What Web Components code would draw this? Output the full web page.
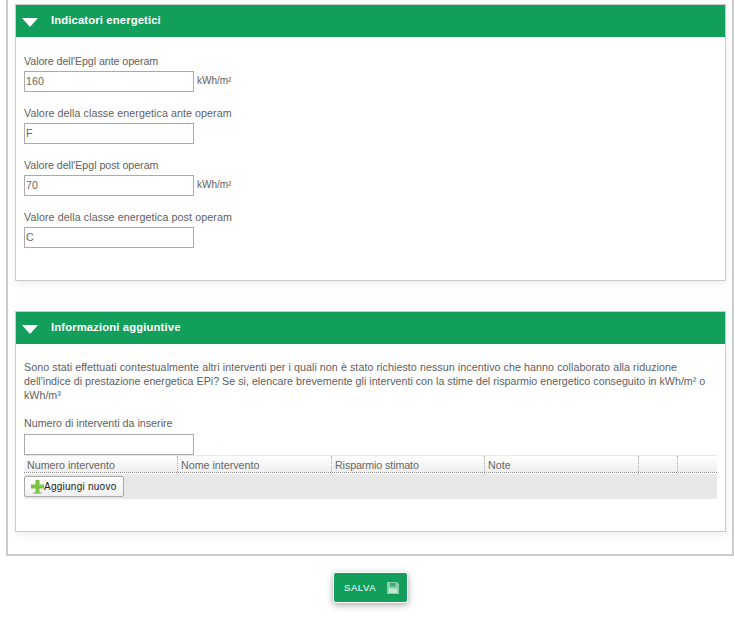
<!DOCTYPE html>
<html lang="it"><head><meta charset="utf-8"><title>Indicatori</title>
<style>
html,body{margin:0;padding:0;background:#fff}
body{width:734px;height:625px;overflow:hidden;font:10px "Liberation Sans",Arial,sans-serif;color:#555}
</style></head><body>
<template id="t-panel"><style>
:host{display:block;border:1px solid #ccc;background:#fff;box-shadow:0 3px 8px rgba(0,0,0,.07)}
.h{height:32px;background:#129e5b;color:#fff;display:flex;align-items:center;font:bold 11.3px "Liberation Sans",Arial,sans-serif;padding-left:6px;gap:13px;letter-spacing:.12px}
.h span{position:relative;top:-1px}
.h svg{display:block;width:16px;height:9px;margin-top:2px}
.b{padding:var(--pad,15px 8px 0);height:var(--h);box-sizing:border-box}
</style><div class="h"><svg viewBox="0 0 16 9"><path d="M0 0H16L8 9Z" fill="#fff"/></svg><span><slot name="title"></slot></span></div><div class="b"><slot></slot></div></template>

<template id="t-field"><style>
:host{display:block;height:52px;font:10.7px "Liberation Sans",Arial,sans-serif;color:#5e5e5e}
label{display:block;height:var(--lh,19px);line-height:18px;letter-spacing:var(--ls,0)}
.r{display:flex;align-items:center;gap:3px}
.i{width:170px;height:21px;box-sizing:border-box;border:1px solid #aaa;padding-left:1px;line-height:18px;font-size:10.7px;color:#666;background:#fff}
.u{font-size:10px;position:relative;top:-1px}
</style><label><slot></slot></label><div class="r"><div class="i"></div><span class="u"></span></div></template>

<template id="t-grid"><style>
:host{display:block;width:693px;font:10.7px "Liberation Sans",Arial,sans-serif;color:#666}
.hd{display:grid;grid-template-columns:154px 154px 153px 154px 39px 39px;height:18px;box-sizing:border-box;border-top:1px solid #e8e8e8;border-bottom:1px dotted #888;background:linear-gradient(#fff,#eee)}
.hd div{border-right:1px dotted #aaa;padding-left:3px;line-height:18px;box-sizing:border-box;white-space:nowrap}
.hd div:nth-child(3){letter-spacing:-.1px}
.hd div:last-child{border:0}
.tb{margin-top:1px;height:25px;box-sizing:border-box;padding-top:2px;background:#e8e8e8}
</style><div class="hd"><div>Numero intervento</div><div>Nome intervento</div><div>Risparmio stimato</div><div>Note</div><div></div><div></div></div><div class="tb"><slot></slot></div></template>

<template id="t-add"><style>
:host{display:inline-flex;box-sizing:border-box;width:100px;height:21px;align-items:center;padding-left:6px;border:1px solid #aaa;border-radius:2px;background:linear-gradient(#fff,#f0f0f0);font:10px "Liberation Sans",Arial,sans-serif;color:#222;letter-spacing:.25px;vertical-align:top}
svg{width:13px;height:14px;display:block;flex:none}
</style><svg viewBox="0 0 13 14"><ellipse cx="6.500" cy="13" rx="5" ry="1" fill="#bbb"/><path d="M4.500 0H8.500V4.500H13V8.500H8.500V13H4.500V8.500H0V4.500H4.500Z" fill="#7cc242"/><path d="M5 1H8V5H12V6H8V1Z" fill="#a8dc70" opacity=".7"/></svg><slot></slot></template>

<template id="t-save"><style>
:host{display:flex;box-sizing:border-box;width:75px;height:31px;align-items:center;justify-content:space-between;padding:0 8px 0 10px;background:#129e5b;border:1px solid #fff;border-radius:3px;box-shadow:0 2px 7px rgba(0,0,0,.35);color:#fff;font:9.5px "Liberation Sans",Arial,sans-serif;letter-spacing:.6px}
svg{display:block;width:12px;height:12px}
</style><slot></slot><svg viewBox="0 0 12 12"><path d="M0 0H10L12 2V12H0Z" fill="#8ccfac"/><path d="M3 1H8.500V4.500H3Z" fill="#129e5b" opacity=".7"/><path d="M2 6.500H10V11H2Z" fill="#c4e8d5"/></svg></template>

<app-shell>
  <info-panel style="--h:243px">
    <span slot="title">Indicatori energetici</span>
    <energy-field value="160" unit="kWh/m²" style="--ls:-.07px">Valore dell'Epgl ante operam</energy-field>
    <energy-field value="F" style="--ls:.07px">Valore della classe energetica ante operam</energy-field>
    <energy-field value="70" unit="kWh/m²" style="--ls:-.04px">Valore dell'Epgl post operam</energy-field>
    <energy-field value="C" style="--ls:.09px">Valore della classe energetica post operam</energy-field>
  </info-panel>
  <info-panel class="second" style="--h:187px;--pad:16px 8px 0">
    <span slot="title">Informazioni aggiuntive</span>
    <p style="margin:0 0 12px;font:10.7px/14px 'Liberation Sans',Arial,sans-serif;color:#5e5e5e;white-space:nowrap"><span style="letter-spacing:.065px">Sono stati effettuati contestualmente altri interventi per i quali non è stato richiesto nessun incentivo che hanno collaborato alla riduzione</span><br><span style="letter-spacing:.014px">dell'indice di prestazione energetica EPi? Se si, elencare brevemente gli interventi con la stime del risparmio energetico conseguito in kWh/m² o</span><br>kWh/m³</p>
    <energy-field style="height:41px;--lh:20px">Numero di interventi da inserire</energy-field>
    <interventi-grid><add-button>Aggiungi nuovo</add-button></interventi-grid>
  </info-panel>
</app-shell>
<save-button>SALVA</save-button>

<script>
function mount(el,id){const r=el.attachShadow({mode:'open'});r.appendChild(document.getElementById(id).content.cloneNode(true));return r}
customElements.define('info-panel',class extends HTMLElement{connectedCallback(){if(!this.shadowRoot)mount(this,'t-panel')}});
customElements.define('energy-field',class extends HTMLElement{connectedCallback(){if(this.shadowRoot)return;const r=mount(this,'t-field');r.querySelector('.i').textContent=this.getAttribute('value')||'';r.querySelector('.u').textContent=this.getAttribute('unit')||''}});
customElements.define('interventi-grid',class extends HTMLElement{connectedCallback(){if(!this.shadowRoot)mount(this,'t-grid')}});
customElements.define('add-button',class extends HTMLElement{connectedCallback(){if(!this.shadowRoot)mount(this,'t-add')}});
customElements.define('save-button',class extends HTMLElement{connectedCallback(){if(this.shadowRoot)return;mount(this,'t-save');this.style.margin='16px 0 0 333px'}});
customElements.define('app-shell',class extends HTMLElement{connectedCallback(){if(this.shadowRoot)return;const r=this.attachShadow({mode:'open'});r.innerHTML='<style>:host{display:block;box-sizing:border-box;margin:0 0 0 6px;width:728px;height:556px;border:solid #ccc;border-width:0 2px 2px 2px;padding:4px 6px 0 7px}::slotted(info-panel){display:block}::slotted(.second){margin-top:30px}</style><slot></slot>'}});
</script>
</body></html>
